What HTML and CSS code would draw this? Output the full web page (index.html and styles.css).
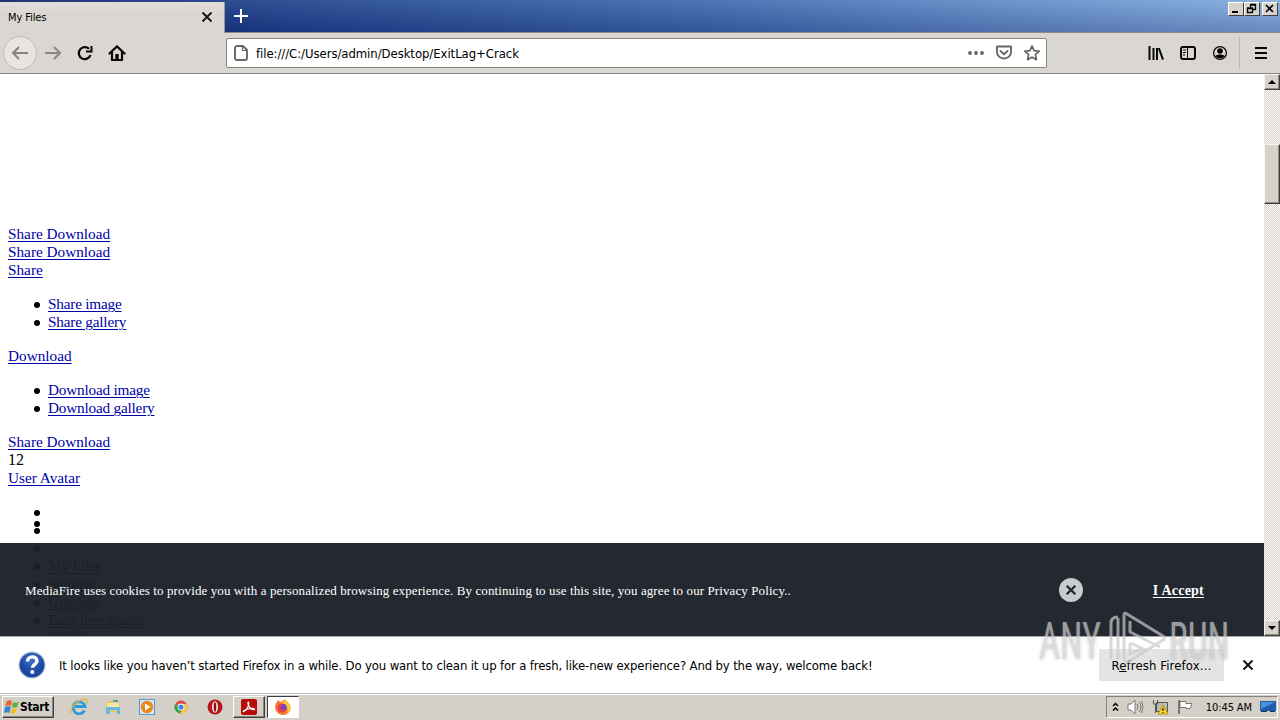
FILE: index.html
```
<!DOCTYPE html>
<html lang="en">
<head>
  <meta charset="UTF-8">
  <title>My Files</title>
  <link rel="stylesheet" href="styles.css">
</head>
<body>

  <!-- Title bar and tabs -->
  <header class="titlebar">
    <div class="tab">
      <span>My Files</span>
      <svg class="tab-close" width="12" height="12" viewBox="0 0 12 12"><path d="M1.5 1.5l9 9M10.5 1.5l-9 9" stroke="#111" stroke-width="1.8"/></svg>
    </div>
    <svg class="new-tab" width="16" height="16" viewBox="0 0 16 16"><path d="M8 1v14M1 8h14" stroke="#fff" stroke-width="2"/></svg>
    <div class="window-buttons">
      <span class="win-btn"><svg width="14" height="12"><path d="M3 9h6" stroke="#000" stroke-width="2"/></svg></span>
      <span class="win-btn restore"><svg width="14" height="12"><path d="M5.500 4V1.500h5v5H8M5 2h6M2.500 5.500h5v4h-5zM2 5h6" fill="none" stroke="#000" stroke-width="1.300"/></svg></span>
      <span class="win-btn"><svg width="14" height="12"><path d="M3 2l7 7M10 2l-7 7" stroke="#000" stroke-width="1.600"/></svg></span>
    </div>
  </header>

  <!-- Navigation toolbar -->
  <nav class="toolbar">
    <div class="nav-buttons">
      <span class="back"><svg width="18" height="16" viewBox="0 0 18 16"><path d="M17 8H2M8 2L2 8l6 6" fill="none" stroke="#85827e" stroke-width="2"/></svg></span>
      <svg width="18" height="16" viewBox="0 0 18 16"><path d="M1 8h15M10 2l6 6-6 6" fill="none" stroke="#8b8883" stroke-width="2"/></svg>
      <svg width="16" height="16" viewBox="0 0 16 16"><path d="M13.500 10A6 6 0 1 1 12 3.800" fill="none" stroke="#080808" stroke-width="2.300"/><path d="M15.500 1v6.500H9V5.500h4.500V1z" fill="#080808"/></svg>
      <svg width="18" height="16" viewBox="0 0 18 16"><path d="M1.500 8.500L9 1.400l7.500 7.100" fill="none" stroke="#080808" stroke-width="2.200" stroke-linecap="round"/><path d="M4 7v8h10V7" fill="none" stroke="#080808" stroke-width="2.200" stroke-linejoin="round"/><path d="M7.300 15V9h3.400v6z" fill="#080808"/></svg>
    </div>
    <div class="urlbar">
      <svg width="14" height="16" viewBox="0 0 14 16"><path d="M3 1h6l4 4v8a2 2 0 0 1-2 2H3a2 2 0 0 1-2-2V3a2 2 0 0 1 2-2z" fill="none" stroke="#666" stroke-width="1.900"/><path d="M8.500 1v4.500H13" fill="none" stroke="#666" stroke-width="1.200"/></svg>
      <span class="url">file:///C:/Users/admin/Desktop/ExitLag+Crack</span>
      <svg width="16" height="16" viewBox="0 0 16 16" fill="#666"><circle cx="2" cy="8" r="1.900"/><circle cx="8" cy="8" r="1.900"/><circle cx="14" cy="8" r="1.900"/></svg>
      <svg width="16" height="16" viewBox="0 0 16 16" fill="none" stroke="#666" stroke-width="1.900"><path d="M1 1.500h14v5.500a7 6.500 0 0 1-14 0z" stroke-linejoin="round"/><path d="M4.500 6L8 9.300 11.500 6" stroke-linecap="round"/></svg>
      <svg width="16" height="16" viewBox="0 0 16 16"><path d="M8 1l2.100 4.600 5 .6-3.700 3.400 1 5L8 12.200l-4.400 2.400 1-5L.900 6.200l5-.6z" fill="none" stroke="#666" stroke-width="1.800" stroke-linejoin="round"/></svg>
    </div>
    <div class="tools">
      <svg width="16" height="16" viewBox="0 0 16 16"><path d="M1.500 1v14M5.500 3v12M9 3v12M10.800 3l4.200 11.600" stroke="#080808" stroke-width="2" fill="none"/></svg>
      <svg width="16" height="16" viewBox="0 0 16 16"><rect x="1" y="2" width="14" height="12" rx="2" fill="none" stroke="#080808" stroke-width="2"/><path d="M7.500 2v12M3 5h3M3 7.500h3M3 10h2" stroke="#080808"/></svg>
      <svg width="16" height="16" viewBox="0 0 16 16"><circle cx="8" cy="8" r="6.400" fill="none" stroke="#080808" stroke-width="1.300"/><circle cx="8" cy="6" r="2.800"/><path d="M3.500 11c1-2 8-2 9 0-2 3-7 3-9 0z"/></svg>
      <span class="divider"></span>
      <svg width="12" height="12" viewBox="0 0 12 12"><path d="M0 1h12M0 6h12M0 11h12" stroke="#080808" stroke-width="2"/></svg>
    </div>
  </nav>

  <!-- Page -->
  <main class="viewport">
    <div class="page">
      <div><a href="#">Share</a><a href="#"> Download</a></div>
      <div><a href="#">Share</a><a href="#"> Download</a></div>
      <div><a href="#">Share</a></div>
      <ul>
        <li><a href="#">Share image</a></li>
        <li><a href="#">Share gallery</a></li>
      </ul>
      <div><a href="#">Download</a></div>
      <ul>
        <li><a href="#">Download image</a></li>
        <li><a href="#">Download gallery</a></li>
      </ul>
      <div><a href="#">Share</a><a href="#"> Download</a></div>
      <div>12</div>
      <div><a href="#">User Avatar</a></div>
      <ul class="menu">
        <li class="gap-a"></li>
        <li class="gap-b"></li>
        <li></li>
        <li></li>
        <li><a href="#">My Files</a></li>
        <li><a href="#">Settings</a></li>
        <li><a href="#">Upgrade</a></li>
        <li><a href="#">Earn free space!</a></li>
        <li><a href="#">Mobile</a></li>
      </ul>
      <div class="cookies">
        <span class="cookie-text">MediaFire uses cookies to provide you with a personalized browsing experience. By continuing to use this site, you agree to our Privacy Policy..</span>
        <svg class="dismiss" width="24" height="24" viewBox="0 0 24 24"><circle cx="12" cy="12" r="12" fill="#c8cacc"/><path d="M7.700 7.700l8.600 8.600M16.300 7.700l-8.600 8.600" stroke="#22262f" stroke-width="2.300"/></svg>
        <a class="accept" href="#">I Accept</a>
      </div>
    </div>
    <div class="scrollbar">
      <span class="scroll-btn"><svg width="8" height="4"><path d="M0 4l4-4 4 4z"/></svg></span>
      <span class="thumb"></span>
      <span class="scroll-btn down"><svg width="8" height="4"><path d="M0 0h8L4 4z"/></svg></span>
    </div>
  </main>

  <!-- Notification bar -->
  <section class="notice">
    <svg width="28" height="28" viewBox="0 0 28 28">
      <defs><radialGradient id="help" cy=".3"><stop offset="0" stop-color="#3f72c8"/><stop offset="1" stop-color="#1b47a0"/></radialGradient></defs>
      <circle cx="14" cy="14" r="13.500" fill="#a9bad8"/><circle cx="14" cy="14" r="12.300" fill="url(#help)"/>
      <path d="M9.500 10.500c0-6.200 9.500-6 9.500-.6 0 3.400-4.600 3.400-4.600 6.900" fill="none" stroke="#fff" stroke-width="3.400"/><circle cx="14.300" cy="21" r="2.100" fill="#fff"/>
    </svg>
    <span class="notice-text">It looks like you haven’t started Firefox in a while. Do you want to clean it up for a fresh, like-new experience? And by the way, welcome back!</span>
    <span class="refresh"><span>R<u>e</u>fresh Firefox…</span></span>
    <svg width="12" height="12" viewBox="0 0 12 12"><path d="M1.500 1.500l9 9M10.500 1.500l-9 9" stroke="#111" stroke-width="1.900"/></svg>
  </section>

  <!-- Taskbar -->
  <footer class="taskbar">
    <span class="start">
      <svg width="16" height="16" viewBox="0 0 16 16"><path d="M3 2c2-1 3-1 5 0L7 7C5 6 4 6 1 7z" fill="#e8602c"/><path d="M9 3c2 1 4 1 6 0l-2 5c-2 1-3 1-5 0z" fill="#65ad3c"/><path d="M1 8c2-1 4-1 6 0l-2 6c-2-1-3-1-5 0z" fill="#3486d4"/><path d="M8 9c2 1 3 1 5 0l-2 5c-2 1-3 1-5 0z" fill="#f4bd22"/></svg>
      <b>Start</b>
    </span>
    <div class="tasks">
      <span><svg width="18" height="18" viewBox="0 0 18 18"><path d="M14.500 12.500A6 6 0 1 1 15 8.500H5" fill="none" stroke="#2d9bd8" stroke-width="2.800"/><path d="M1 16C-2 10 12-2 17 2c1 1 0 3-1 4" fill="none" stroke="#e5b83b" stroke-width="1.300"/></svg></span>
      <span><svg width="18" height="18" viewBox="0 0 18 18"><path d="M2 3h6l1 2h7v9H2z" fill="#e6c766"/><path d="M3 5h12v7H3z" fill="#f8e7a2"/><path d="M2 9h14v7h-3v-4H6v4H2z" fill="#69b9df"/><path d="M9 3h5" stroke="#5fa568" stroke-width="2"/></svg></span>
      <span><svg width="18" height="18" viewBox="0 0 18 18"><rect x="1.500" y="1.500" width="15" height="15" fill="#d6e8f5" stroke="#5797c9"/><circle cx="9" cy="9" r="6.200" fill="#ef861d"/><path d="M7 5.500v7L12.500 9z" fill="#fff"/></svg></span>
      <span><svg width="18" height="18" viewBox="0 0 18 18"><circle cx="9" cy="9" r="6.500" fill="#e44b3b"/><path d="M9 9L3.300 6A6.500 6.500 0 0 0 8 15.400L11.500 10z" fill="#38a657"/><path d="M9 6h5.800A6.500 6.500 0 0 1 8 15.400L11.500 10z" fill="#f6c945"/><circle cx="9" cy="9" r="3.400" fill="#fff"/><circle cx="9" cy="9" r="2.600" fill="#4086e8"/></svg></span>
      <span><svg width="18" height="18" viewBox="0 0 18 18"><circle cx="9" cy="9" r="7.500" fill="#b5161b"/><ellipse cx="9" cy="9" rx="3" ry="5.800" fill="#f3e8e8"/><ellipse cx="9" cy="9" rx="1.300" ry="4.800" fill="#8f0e13"/></svg></span>
      <span class="open"><svg width="18" height="18" viewBox="0 0 18 18"><rect x="1" y="1" width="16" height="16" rx="2" fill="#b70b08"/><path d="M3.500 13.500C6 13 9.500 8 8.700 4.500 8.300 3 7.400 5 8.400 7.200 9.700 10 12 11.800 14.500 11.500 14.500 9.500 7 10.500 4.200 12.600 3 13.500 3 14 3.500 13.500z" fill="none" stroke="#fff" stroke-width="1.200"/></svg></span>
      <span class="open active"><svg width="18" height="18" viewBox="0 0 18 18"><path d="M2 5c1 0 1-2 2-3l2 2c2 0 3-2 5-3 0 2 3 2 5 6 2 5-2 10-7 10S-1 12 2 5z" fill="#f87532"/><path d="M11 1c0 2 3 2 5 6 1 3 0 7-3 8 2-5-1-8-5-9 1-2 2-4 3-5z" fill="#ffc735"/><circle cx="9" cy="9.500" r="3.700" fill="#7544c2"/><path d="M4 7c3-1 5 0 5 1l-3 1c0 3 4 3 6 2-2 6-10 4-8-4z" fill="#ef394b"/></svg></span>
    </div>
    <div class="tray">
      <svg width="7" height="10" viewBox="0 0 7 10"><path d="M1 4l2.500-2.500L6 4M1 8.500L3.500 6 6 8.500" fill="none" stroke="#000" stroke-width="1.500"/></svg>
      <svg width="17" height="16" viewBox="0 0 17 16"><path d="M1 5h3l4-4v14l-4-4H1z" fill="#fff" stroke="#777"/><path d="M10 5q2 3 0 6M12 3q4 5 0 10M14.500 2q3 6 0 12" fill="none" stroke="#777"/></svg>
      <svg width="17" height="16" viewBox="0 0 17 16"><path d="M4.500 3.500h11v9h-11z" fill="#bdbdb5" stroke="#555"/><path d="M1.500 1v4h4V1M3.500 5v9" fill="none" stroke="#555"/><path d="M11 6l5 9H6z" fill="#ffdc22" stroke="#b89412"/><path d="M11 9v3M11 13v1" stroke="#222" stroke-width="1.300"/></svg>
      <svg width="17" height="16" viewBox="0 0 17 16"><path d="M2 1v14" stroke="#777" stroke-width="2"/><path d="M3 2.500h6v2h6l-2 5H9v-1H3z" fill="#fff" stroke="#777"/></svg>
      <span class="clock">10:45 AM</span>
      <svg width="16" height="12" viewBox="0 0 16 12"><path d="M0 0h16v10H0z" fill="#1f5cae"/><path d="M1 1h14L1 8z" fill="#4d91d8"/><path d="M1 10.500h6M10 10.500h5" stroke="#1b3554"/></svg>
    </div>
  </footer>

  <!-- Watermark -->
  <div class="watermark">
    <span class="mark-any">ANY</span>
    <svg width="60" height="56" viewBox="0 0 60 56"><path d="M5 48V12q0-6 7-6M12 48V7M18 48V4q0-3 3-1l36 22q3 2 0 4L22 51l-4-3M24 10v11l30 15M24 32v11l11-5M24 32l16 7" fill="none" stroke="#c9cacc" stroke-width="3" stroke-linejoin="round"/></svg>
    <span class="mark-run">RUN</span>
  </div>

</body>
</html>
```
FILE: styles.css
```
* {
  box-sizing: border-box;
}

body {
  margin: 0;
  width: 1280px;
  height: 720px;
  overflow: hidden;
  position: relative;
  display: flex;
  flex-direction: column;
  background: #fff;
  color: #000;
  font-family: "DejaVu Sans Condensed", "DejaVu Sans", sans-serif;
  font-stretch: condensed;
  font-size: 12px;
}

svg {
  display: block;
  flex: none;
}

span {
  white-space: nowrap;
}

/* Title bar */
.titlebar {
  height: 33px;
  flex: none;
  display: flex;
  align-items: flex-start;
  background: linear-gradient(rgba(255,255,255,.08), rgba(0,0,60,.2)), linear-gradient(90deg, #0a246a 0, #20438f 22%, #3f6ab0 55%, #83addf 100%);
  border-bottom: 1px solid #8b8a87;
}

.tab {
  width: 225px;
  height: 33px;
  margin-top: 2px;
  padding: 0 11px 3px 8px;
  display: flex;
  justify-content: space-between;
  align-items: center;
  background: linear-gradient(#e2dfdb, #dad6d2 12px);
  border-right: 1px solid #9a9895;
  font-size: 11px;
  letter-spacing: -0.1px;
}

.new-tab {
  margin: 8px 0 0 8px;
}

.window-buttons {
  display: flex;
  margin: 2px 2px 0 auto;
}

.win-btn {
  width: 16px;
  height: 14px;
  background: #d8d4cd;
  border: 1px solid #fff;
  border-right-color: #404040;
  border-bottom-color: #404040;
}

.restore {
  margin-right: 2px;
}

/* Toolbar */
.toolbar {
  height: 41px;
  flex: none;
  display: flex;
  align-items: center;
  background: #dad6d2;
  border-bottom: 1px solid #85837f;
}

.nav-buttons {
  width: 226px;
  padding-left: 3px;
  display: flex;
  align-items: center;
  gap: 15px;
}

.nav-buttons svg:nth-of-type(1) {
  margin-left: -8px;
}

.back {
  width: 34px;
  height: 34px;
  display: flex;
  align-items: center;
  justify-content: center;
  background: #e7e4e1;
  border: 1px solid #bdb9b5;
  border-radius: 50%;
}

.nav-buttons .back svg {
  margin-left: 0;
}

.urlbar {
  width: 821px;
  height: 30px;
  padding: 0 6px 0 7px;
  display: flex;
  align-items: center;
  gap: 12px;
  background: #fff;
  border: 1px solid #85837f;
  border-radius: 2px;
}

.url {
  flex: 1;
  margin-left: -4px;
  font-size: 13px;
  letter-spacing: -0.06px;
}

.tools {
  margin-left: auto;
  padding-right: 13px;
  height: 100%;
  display: flex;
  align-items: center;
  gap: 16px;
}

.divider {
  width: 1px;
  height: 32px;
  margin: 0 -1px 0 -5px;
  background: #bfbbb6;
}

/* Page content */
.viewport {
  height: 562px;
  flex: none;
  display: flex;
}

.page {
  flex: 1;
  height: 562px;
  padding: 151px 8px 0;
  position: relative;
  overflow: hidden;
  font: 16px/18px "Liberation Serif", serif;
}

.page > div:not(.cookies) {
  height: 18px;
}

.page a {
  color: #0000a8;
  font-size: 15.25px;
  text-underline-offset: 2px;
  text-decoration-thickness: 1px;
}

.page ul {
  margin: 16px 0;
  padding-left: 40px;
  list-style: none;
}

.page li {
  height: 18px;
  display: flex;
}

.page li a {
  letter-spacing: -0.2px;
}

/* Bullets */
.page li::before {
  content: "";
  width: 6px;
  height: 6px;
  flex: none;
  margin: 7px 8px 0 -14px;
  border-radius: 50%;
  background: #000;
}

.page .gap-a {
  height: 11px;
}

.page .gap-b {
  height: 7px;
}

/* Covers the lower part of the page */
.cookies {
  position: absolute;
  left: 0;
  right: 0;
  bottom: 0;
  height: 93px;
  padding: 0 60px 0 25px;
  display: flex;
  align-items: center;
  background: rgba(27, 31, 40, .96);
  color: #fff;
  font-size: 13px;
}

.cookie-text {
  flex: 1;
  padding-top: 2px;
  letter-spacing: 0.1px;
}

.cookies .accept {
  margin: 2px 0 0 70px;
  color: #fff;
  font-size: 14px;
  font-weight: bold;
  letter-spacing: 0.22px;
}

.scrollbar {
  width: 16px;
  display: flex;
  flex-direction: column;
  background: repeating-conic-gradient(#d4d0c8 0 25%, #fff 0 50%) 0 0 / 2px 2px;
}

.scroll-btn,
.thumb {
  background: #d6d2ca;
  border: 1px solid #f8f7f5;
  border-right-color: #404040;
  border-bottom-color: #404040;
  box-shadow: inset -1px -1px #908d86;
}

.scroll-btn {
  height: 16px;
  display: flex;
  align-items: center;
  justify-content: center;
}

.thumb {
  height: 60px;
  margin-top: 54px;
}

.down {
  margin-top: auto;
}

/* Notification */
.notice {
  height: 57px;
  flex: none;
  padding: 0 26px 0 18px;
  display: flex;
  align-items: center;
  background: #fff;
  border-top: 1px solid #aaa;
}

.notice-text {
  flex: 1;
  margin-left: 13px;
  font-size: 13px;
  letter-spacing: -0.14px;
}

.refresh {
  width: 125px;
  height: 32px;
  margin-right: 18px;
  display: flex;
  align-items: center;
  justify-content: center;
  background: #e4e4e4;
  font-size: 13px;
  letter-spacing: 0.12px;
}

/* Taskbar */
.taskbar {
  height: 27px;
  flex: none;
  padding: 2px 2px 0;
  display: flex;
  background: #d4d0c8;
  border-top: 1px solid #c0bcb4;
  box-shadow: inset 0 1px #fff;
}

.start {
  width: 52px;
  height: 22px;
  padding-left: 1px;
  display: flex;
  align-items: center;
  border: 1px solid #fff;
  border-right-color: #404040;
  border-bottom-color: #404040;
  box-shadow: inset -1px -1px #8a8780;
  font-size: 12px;
  letter-spacing: -0.3px;
}

.tasks {
  display: flex;
  margin-left: 9px;
  gap: 2px;
}

.tasks span {
  width: 32px;
  height: 22px;
  display: flex;
  align-items: center;
  justify-content: center;
}

.tasks .open {
  border: 1px solid #fff;
  border-right-color: #404040;
  border-bottom-color: #404040;
  box-shadow: inset -1px -1px #8a8780;
}

.tasks .active {
  background: #fff;
  border-color: #404040 #fff #fff #404040;
  box-shadow: none;
}

.tray {
  width: 172px;
  height: 22px;
  margin-left: auto;
  padding: 0 1px 0 5px;
  display: flex;
  align-items: center;
  justify-content: space-between;
  border: 1px solid #85827b;
  border-right-color: #fff;
  border-bottom-color: #fff;
}

.clock {
  margin-left: 4px;
  font-size: 11px;
  letter-spacing: -0.1px;
}

/* Lies over everything */
.watermark {
  position: absolute;
  left: 1039px;
  top: 608px;
  display: flex;
  align-items: center;
  opacity: .7;
  color: #cdced0;
  font-family: Roboto, sans-serif;
  font-size: 52px;
  line-height: 56px;
  text-shadow: 0 0 4px rgba(100,100,100,.5);
}

.mark-any,
.mark-run {
  width: 67px;
  padding-top: 6px;
  transform: scaleX(.68);
  transform-origin: left;
}

.mark-any {
  transform: scaleX(.7);
}

.mark-run {
  margin-left: 3px;
}
```
